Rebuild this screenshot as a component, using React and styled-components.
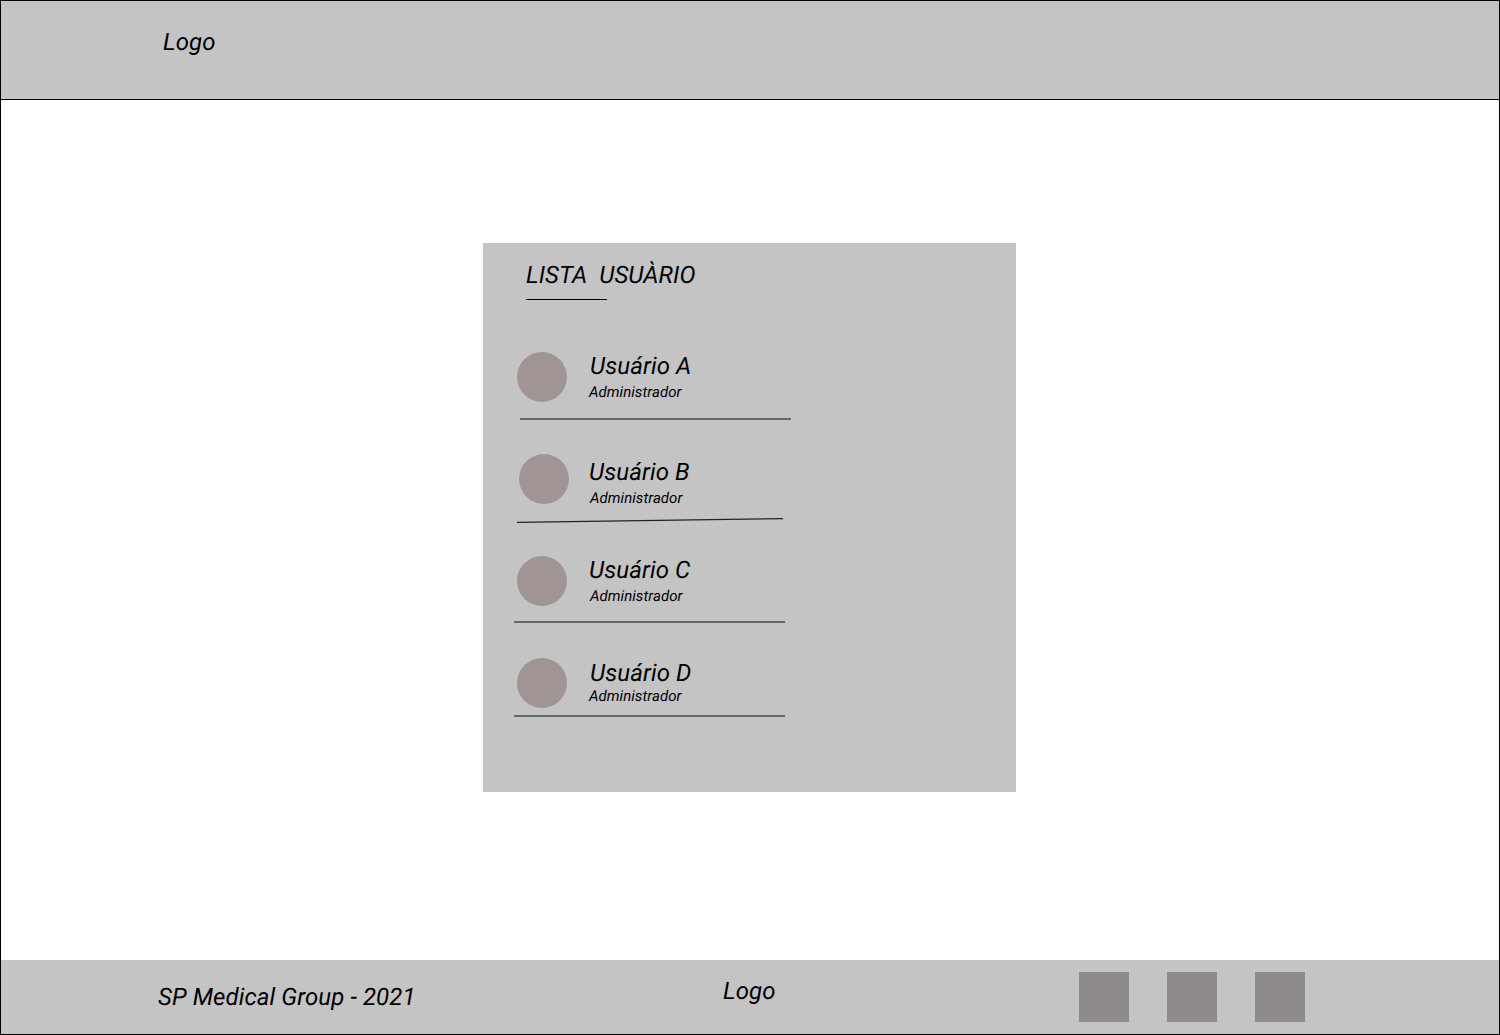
import React from "react";
import styled, { createGlobalStyle } from "styled-components";

const Global = createGlobalStyle`
  html, body { margin: 0; padding: 0; background: #fff; }
  body { font-family: Roboto, "Liberation Sans", sans-serif; }
`;

const Frame = styled.div`
  box-sizing: border-box;
  width: 1500px;
  height: 1035px;
  border: 1px solid #000;
  display: flex;
  flex-direction: column;
  background: #fff;
  color: #000;
  font-family: Roboto, "Liberation Sans", sans-serif;
  font-style: italic;
  font-weight: 400;
  text-rendering: geometricPrecision;
  overflow: hidden;
`;

const Header = styled.header`
  box-sizing: border-box;
  height: 99px;
  flex: none;
  padding: 27px 0 0 162px;
  background: #c4c4c4;
  border-bottom: 1px solid #000;
`;

const BigText = styled.div`
  font-size: 24px;
  line-height: 28px;
  letter-spacing: 0.09px;
`;

const Main = styled.main`
  flex: 1;
  padding: 143px 0 0 482px;
`;

const Card = styled.section`
  box-sizing: border-box;
  width: 533px;
  height: 549px;
  padding-top: 18px;
  background: #c4c4c4;
`;

const Title = styled.h1`
  margin: 0 0 0 43px;
  font-size: 24px;
  line-height: 28px;
  font-weight: 400;
  letter-spacing: 0.09px;
  white-space: pre;
`;

const TitleRule = styled.div`
  width: 81px;
  height: 1px;
  margin: 10px 0 0 43px;
  background: #000;
`;

const Row = styled.div`
  display: flex;
  height: 50px;
  margin-top: ${(p) => p.$top}px;
  padding-left: ${(p) => p.$left}px;
`;

const Avatar = styled.div`
  flex: none;
  width: 50px;
  height: 50px;
  border-radius: 50%;
  background: #a09494;
`;

const Info = styled.div`
  display: flex;
  flex-direction: column;
  margin-top: ${(p) => p.$top}px;
`;

const Name = styled.div`
  font-size: 24px;
  line-height: 28px;
  letter-spacing: 0.1px;
  margin-left: ${(p) => p.$x}px;
`;

const Role = styled.div`
  font-size: 15px;
  line-height: 16px;
  letter-spacing: 0.05px;
  margin-top: ${(p) => p.$gap}px;
  margin-left: ${(p) => p.$x}px;
`;

const Rule = styled.div`
  height: 2px;
  width: 271px;
  margin-top: ${(p) => p.$top}px;
  margin-left: ${(p) => p.$left}px;
  background: #666;
`;

const SlantRule = styled.svg`
  display: block;
  width: 268px;
  height: 6px;
  margin-top: 13.7px;
  margin-left: 33px;
`;

const Footer = styled.footer`
  flex: none;
  height: 74px;
  display: flex;
  background: #c4c4c4;
`;

const FooterCopy = styled(BigText)`
  width: 722px;
  padding: 23px 0 0 157px;
  box-sizing: border-box;
`;

const FooterLogo = styled(BigText)`
  width: 356px;
  padding-top: 17px;
  box-sizing: border-box;
`;

const Socials = styled.div`
  display: flex;
  gap: 38px;
  padding-top: 12px;
`;

const Social = styled.div`
  width: 50px;
  height: 50px;
  background: #8f8b8a;
`;

export default function App() {
  return (
    <>
      <Global />
      <Frame>
        <Header>
          <BigText>Logo</BigText>
        </Header>
        <Main>
          <Card>
            <Title>LISTA  USUÀRIO</Title>
            <TitleRule />

            <Row $top={52} $left={34}>
              <Avatar />
              <Info $top={0}>
                <Name $x={23}>Usuário A</Name>
                <Role $gap={4} $x={22}>Administrador</Role>
              </Info>
            </Row>
            <Rule $top={16} $left={37} />

            <Row $top={34.3} $left={36.3}>
              <Avatar />
              <Info $top={3.7}>
                <Name $x={19.7}>Usuário B</Name>
                <Role $gap={4} $x={20.7}>Administrador</Role>
              </Info>
            </Row>
            <SlantRule viewBox="0 0 268 6">
              <line x1="1" y1="4.4" x2="267" y2="0.6" stroke="#222" strokeWidth="1.2" />
            </SlantRule>

            <Row $top={32.4} $left={34}>
              <Avatar />
              <Info $top={-0.4}>
                <Name $x={22}>Usuário C</Name>
                <Role $gap={4} $x={23}>Administrador</Role>
              </Info>
            </Row>
            <Rule $top={14.6} $left={31} />

            <Row $top={35.4} $left={34}>
              <Avatar />
              <Info $top={0.6}>
                <Name $x={23}>Usuário D</Name>
                <Role $gap={1} $x={22}>Administrador</Role>
              </Info>
            </Row>
            <Rule $top={6.6} $left={31} />
          </Card>
        </Main>
        <Footer>
          <FooterCopy>SP Medical Group - 2021</FooterCopy>
          <FooterLogo>Logo</FooterLogo>
          <Socials>
            <Social />
            <Social />
            <Social />
          </Socials>
        </Footer>
      </Frame>
    </>
  );
}
